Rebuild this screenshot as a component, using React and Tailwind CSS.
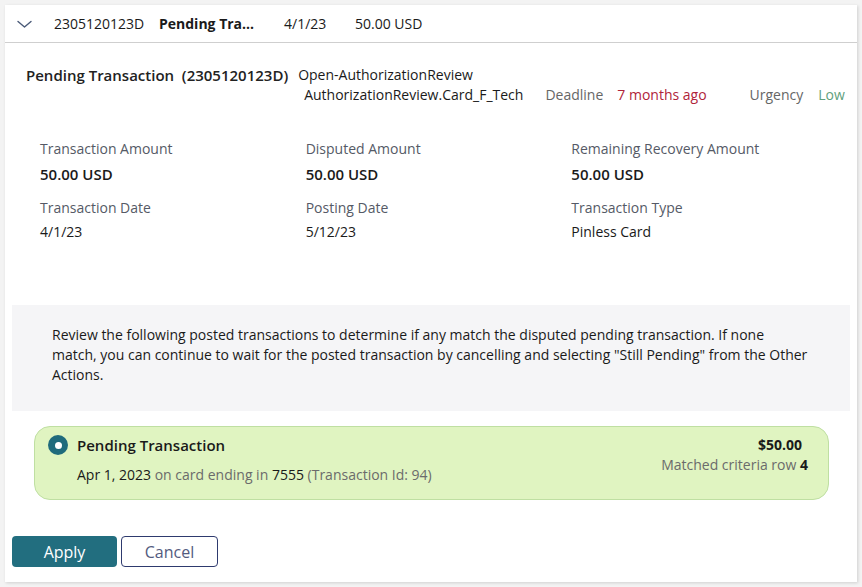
export default function App() {
  return (
    <div className="min-h-[587px] bg-[#f3f3f3] p-[5px]" style={{ fontFamily: '"Open Sans", "Noto Sans", sans-serif' }}>
      <div className="bg-white shadow-[1px_1px_3px_rgba(0,0,0,0.15)] flex flex-col h-[577px] text-[#1a1a1a]">
        {/* Header row */}
        <div className="h-[38px] border-b border-[#cfcfcf] flex items-center text-[14px] pl-[12px]">
          <svg width="15" height="9" viewBox="0 0 15 9" className="mr-[22px] mt-[1px]">
            <path d="M1 1.5 L7.5 7 L14 1.5" fill="none" stroke="#4a5a78" strokeWidth="1.4" strokeLinecap="round" strokeLinejoin="round" />
          </svg>
          <span className="w-[105px]">2305120123D</span>
          <span className="w-[125px] font-bold">Pending Tra...</span>
          <span className="w-[71px]">4/1/23</span>
          <span>50.00 USD</span>
        </div>

        {/* Summary */}
        <div className="pl-[21px] pt-[22px] flex items-start">
          <div className="text-[15px] leading-[20px] font-semibold text-[#222] whitespace-pre">Pending Transaction  (2305120123D)</div>
          <div className="ml-[10px] text-[14px] leading-[20px]">
            <div>Open-AuthorizationReview</div>
            <div className="flex ml-[6px]">
              <span>AuthorizationReview.Card_F_Tech</span>
              <span className="ml-[22px] text-[#666]">Deadline</span>
              <span className="ml-[14px] text-[#b0243a]">7 months ago</span>
              <span className="ml-[43px] text-[#666]">Urgency</span>
              <span className="ml-[15px] text-[#5f9f7d]">Low</span>
            </div>
          </div>
        </div>

        {/* Fields */}
        <div className="grid grid-cols-3 pl-[35px] pr-[20px] mt-[34px]">
          <Field label="Transaction Amount" value="50.00 USD" bold />
          <Field label="Disputed Amount" value="50.00 USD" bold />
          <Field label="Remaining Recovery Amount" value="50.00 USD" bold />
          <Field label="Transaction Date" value="4/1/23" top />
          <Field label="Posting Date" value="5/12/23" top />
          <Field label="Transaction Type" value="Pinless Card" top />
        </div>

        {/* Info box */}
        <div className="mx-[7px] mt-[63px] bg-[#f5f5f7] h-[106px] px-[40px] pt-[20px] text-[14px] leading-[20px] text-[#1a1a1a]">
          Review the following posted transactions to determine if any match the disputed pending transaction. If none match, you can continue to wait for the posted transaction by cancelling and selecting "Still Pending" from the Other Actions.
        </div>

        {/* Green card */}
        <div className="ml-[29px] mr-[28px] mt-[15px] h-[74px] rounded-[16px] border border-[#bfdfa2] bg-[#e0f4c1] flex justify-between pl-[13px] pr-[20px] pt-[8px]">
          <div className="flex items-start">
            <div className="w-[20px] h-[20px] rounded-full bg-[#1f6b7c] flex items-center justify-center">
              <div className="w-[7px] h-[7px] rounded-full bg-white" />
            </div>
            <div className="ml-[9px]">
              <div className="text-[15px] leading-[20px] font-semibold">Pending Transaction</div>
              <div className="text-[14px] leading-[20px] mt-[10px]">
                <span>Apr 1, 2023</span>
                <span className="text-[#6b6b6b]"> on card ending in </span>
                <span>7555</span>
                <span className="text-[#6b6b6b]"> (Transaction Id: 94)</span>
              </div>
            </div>
          </div>
          <div className="text-right">
            <div className="text-[14px] leading-[20px] font-bold pr-[6px]">$50.00</div>
            <div className="text-[14px] leading-[20px] text-[#6b6b6b]">
              Matched criteria row <span className="font-bold text-[#1a1a1a]">4</span>
            </div>
          </div>
        </div>

        {/* Buttons */}
        <div className="flex gap-[4px] ml-[7px] mt-[36px]">
          <button className="w-[105px] h-[31px] rounded-[4px] bg-[#226e7f] text-white text-[16px] leading-none">Apply</button>
          <button className="w-[97px] h-[31px] rounded-[4px] border border-[#2e3a6e] bg-white text-[#535b80] text-[16px] leading-none">Cancel</button>
        </div>
      </div>
    </div>
  );
}

function Field({ label, value, bold, top }) {
  return (
    <div className={top ? "mt-[14px]" : ""}>
      <div className="text-[14px] leading-[20px] text-[#555a66]">{label}</div>
      <div className={bold ? "text-[15px] leading-[20px] font-semibold mt-[5px]" : "text-[14px] leading-[20px] mt-[4px]"}>{value}</div>
    </div>
  );
}
